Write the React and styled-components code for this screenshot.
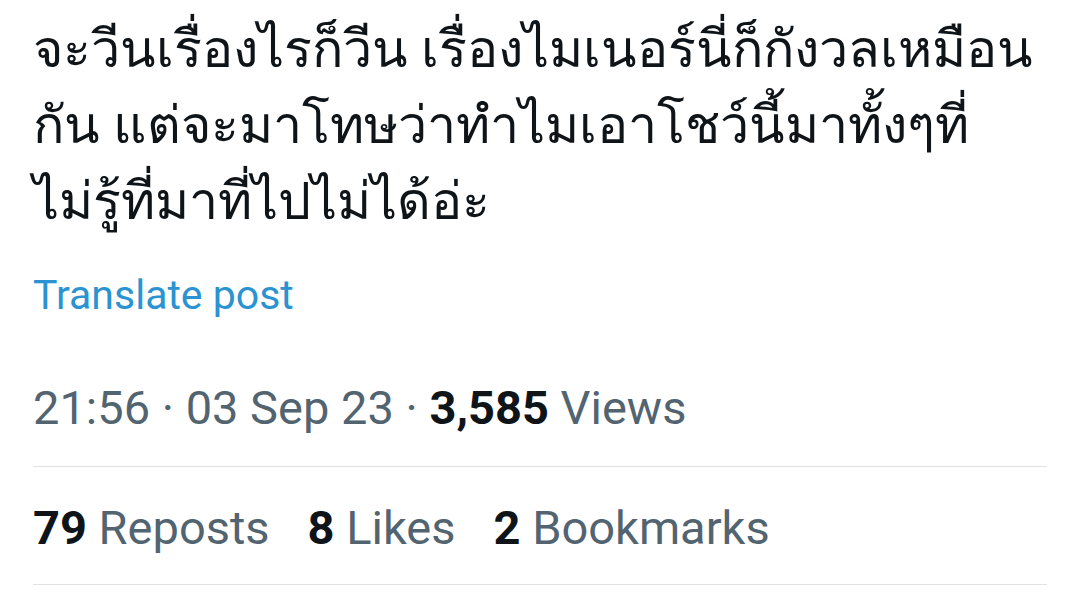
import React from 'react';
import styled, { createGlobalStyle } from 'styled-components';

const GlobalStyle = createGlobalStyle`
  html, body {
    margin: 0;
    padding: 0;
    background: #ffffff;
  }
  body {
    font-family: Roboto, "Noto Sans", "DejaVu Sans", sans-serif;
    -webkit-font-smoothing: antialiased;
  }
`;

const Post = styled.article`
  width: 1080px;
  height: 605px;
  box-sizing: border-box;
  padding: 0 33px;
  overflow: hidden;
  background: #fff;
`;

const Body = styled.p`
  margin: 0;
  padding-top: 12px;
  font-size: 52px;
  line-height: 76px;
  color: #0f1419;
  white-space: nowrap;
`;

const TranslateLink = styled.a`
  display: block;
  margin-top: 30px;
  font-size: 41px;
  line-height: 50px;
  color: #2b93d1;
  text-decoration: none;
`;

const Meta = styled.div`
  margin-top: 61px;
  padding-bottom: 31px;
  font-size: 47px;
  line-height: 54px;
  color: #536471;
  border-bottom: 1px solid #dfe3e6;
`;

const Strong = styled.span`
  color: #0f1419;
  font-weight: 700;
`;

const Stats = styled.div`
  display: flex;
  gap: 38px;
  padding: 34px 0 29px;
  font-size: 47px;
  line-height: 54px;
  color: #536471;
  border-bottom: 1px solid #dfe3e6;
`;

const Stat = ({ value, label }) => (
  <span>
    <Strong>{value}</Strong> {label}
  </span>
);

export default function App() {
  return (
    <>
      <GlobalStyle />
      <Post>
        <Body>
          จะวีนเรื่องไรก็วีน เรื่องไมเนอร์นี่ก็กังวลเหมือน
          <br />
          กัน แต่จะมาโทษว่าทำไมเอาโชว์นี้มาทั้งๆที่
          <br />
          ไม่รู้ที่มาที่ไปไม่ได้อ่ะ
        </Body>
        <TranslateLink href="#">Translate post</TranslateLink>
        <Meta>
          21:56 · 03 Sep 23 · <Strong>3,585</Strong> Views
        </Meta>
        <Stats>
          <Stat value="79" label="Reposts" />
          <Stat value="8" label="Likes" />
          <Stat value="2" label="Bookmarks" />
        </Stats>
      </Post>
    </>
  );
}
